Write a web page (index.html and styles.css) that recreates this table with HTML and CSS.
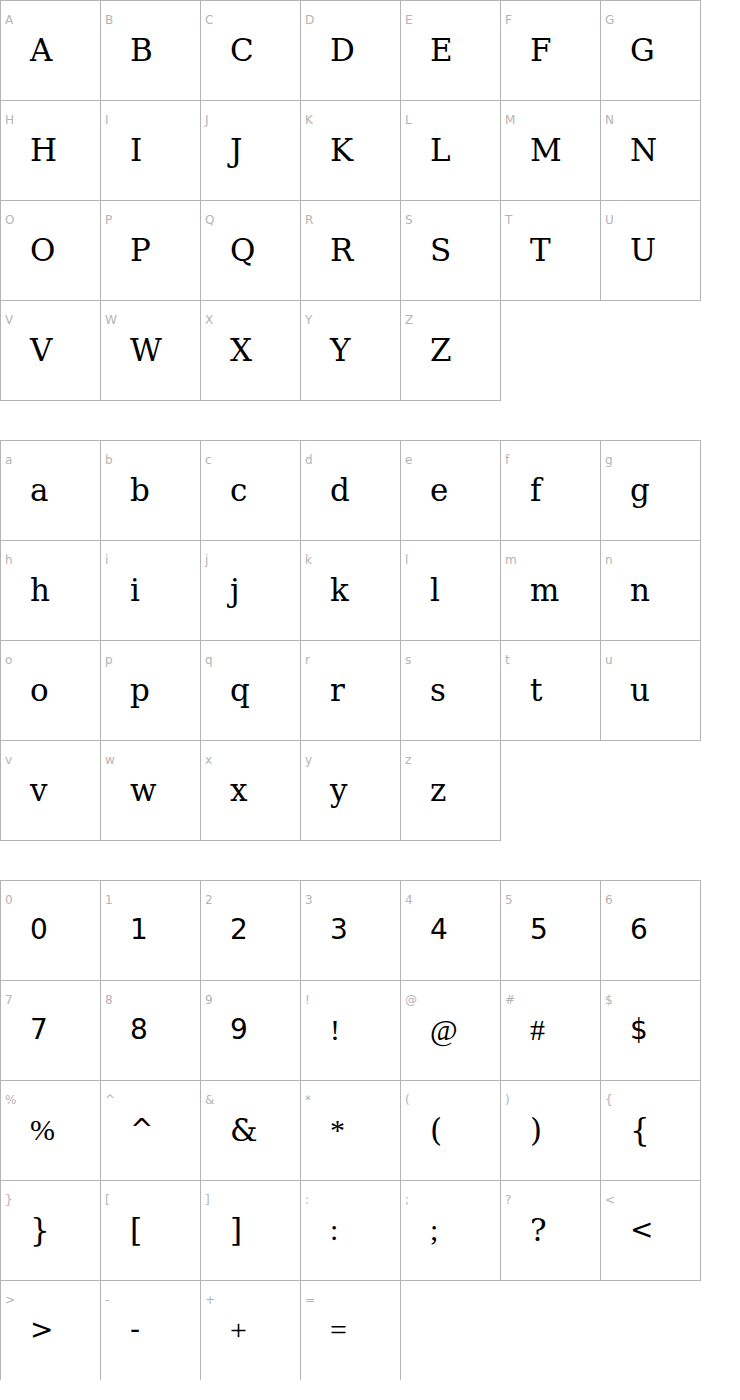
FILE: index.html
```html
<!DOCTYPE html>
<html>
<head>
<meta charset="utf-8">
<link rel="stylesheet" href="styles.css">
</head>
<body>
<div class="sheet">
  <div class="group">
    <div class="cell"><div class="lbl">A</div><div class="gl">A</div></div>
    <div class="cell"><div class="lbl">B</div><div class="gl">B</div></div>
    <div class="cell"><div class="lbl">C</div><div class="gl">C</div></div>
    <div class="cell"><div class="lbl">D</div><div class="gl">D</div></div>
    <div class="cell"><div class="lbl">E</div><div class="gl">E</div></div>
    <div class="cell"><div class="lbl">F</div><div class="gl">F</div></div>
    <div class="cell"><div class="lbl">G</div><div class="gl">G</div></div>
    <div class="cell"><div class="lbl">H</div><div class="gl">H</div></div>
    <div class="cell"><div class="lbl">I</div><div class="gl">I</div></div>
    <div class="cell"><div class="lbl">J</div><div class="gl">J</div></div>
    <div class="cell"><div class="lbl">K</div><div class="gl">K</div></div>
    <div class="cell"><div class="lbl">L</div><div class="gl">L</div></div>
    <div class="cell"><div class="lbl">M</div><div class="gl">M</div></div>
    <div class="cell"><div class="lbl">N</div><div class="gl">N</div></div>
    <div class="cell"><div class="lbl">O</div><div class="gl">O</div></div>
    <div class="cell"><div class="lbl">P</div><div class="gl">P</div></div>
    <div class="cell"><div class="lbl">Q</div><div class="gl">Q</div></div>
    <div class="cell"><div class="lbl">R</div><div class="gl">R</div></div>
    <div class="cell"><div class="lbl">S</div><div class="gl">S</div></div>
    <div class="cell"><div class="lbl">T</div><div class="gl">T</div></div>
    <div class="cell"><div class="lbl">U</div><div class="gl">U</div></div>
    <div class="cell"><div class="lbl">V</div><div class="gl">V</div></div>
    <div class="cell"><div class="lbl">W</div><div class="gl">W</div></div>
    <div class="cell"><div class="lbl">X</div><div class="gl">X</div></div>
    <div class="cell"><div class="lbl">Y</div><div class="gl">Y</div></div>
    <div class="cell"><div class="lbl">Z</div><div class="gl">Z</div></div>
  </div>
  <div class="group">
    <div class="cell"><div class="lbl">a</div><div class="gl">a</div></div>
    <div class="cell"><div class="lbl">b</div><div class="gl">b</div></div>
    <div class="cell"><div class="lbl">c</div><div class="gl">c</div></div>
    <div class="cell"><div class="lbl">d</div><div class="gl">d</div></div>
    <div class="cell"><div class="lbl">e</div><div class="gl">e</div></div>
    <div class="cell"><div class="lbl">f</div><div class="gl">f</div></div>
    <div class="cell"><div class="lbl">g</div><div class="gl">g</div></div>
    <div class="cell"><div class="lbl">h</div><div class="gl">h</div></div>
    <div class="cell"><div class="lbl">i</div><div class="gl">i</div></div>
    <div class="cell"><div class="lbl">j</div><div class="gl">j</div></div>
    <div class="cell"><div class="lbl">k</div><div class="gl">k</div></div>
    <div class="cell"><div class="lbl">l</div><div class="gl">l</div></div>
    <div class="cell"><div class="lbl">m</div><div class="gl">m</div></div>
    <div class="cell"><div class="lbl">n</div><div class="gl">n</div></div>
    <div class="cell"><div class="lbl">o</div><div class="gl">o</div></div>
    <div class="cell"><div class="lbl">p</div><div class="gl">p</div></div>
    <div class="cell"><div class="lbl">q</div><div class="gl">q</div></div>
    <div class="cell"><div class="lbl">r</div><div class="gl">r</div></div>
    <div class="cell"><div class="lbl">s</div><div class="gl">s</div></div>
    <div class="cell"><div class="lbl">t</div><div class="gl">t</div></div>
    <div class="cell"><div class="lbl">u</div><div class="gl">u</div></div>
    <div class="cell"><div class="lbl">v</div><div class="gl">v</div></div>
    <div class="cell"><div class="lbl">w</div><div class="gl">w</div></div>
    <div class="cell"><div class="lbl">x</div><div class="gl">x</div></div>
    <div class="cell"><div class="lbl">y</div><div class="gl">y</div></div>
    <div class="cell"><div class="lbl">z</div><div class="gl">z</div></div>
  </div>
  <div class="group">
    <div class="cell"><div class="lbl">0</div><div class="gl sans">0</div></div>
    <div class="cell"><div class="lbl">1</div><div class="gl sans">1</div></div>
    <div class="cell"><div class="lbl">2</div><div class="gl sans">2</div></div>
    <div class="cell"><div class="lbl">3</div><div class="gl sans">3</div></div>
    <div class="cell"><div class="lbl">4</div><div class="gl sans">4</div></div>
    <div class="cell"><div class="lbl">5</div><div class="gl sans">5</div></div>
    <div class="cell"><div class="lbl">6</div><div class="gl sans">6</div></div>
    <div class="cell"><div class="lbl">7</div><div class="gl sans">7</div></div>
    <div class="cell"><div class="lbl">8</div><div class="gl sans">8</div></div>
    <div class="cell"><div class="lbl">9</div><div class="gl sans">9</div></div>
    <div class="cell"><div class="lbl">!</div><div class="gl times">!</div></div>
    <div class="cell"><div class="lbl">@</div><div class="gl times">@</div></div>
    <div class="cell"><div class="lbl">#</div><div class="gl times">#</div></div>
    <div class="cell"><div class="lbl">$</div><div class="gl sans">$</div></div>
    <div class="cell"><div class="lbl">%</div><div class="gl times">%</div></div>
    <div class="cell"><div class="lbl">^</div><div class="gl sans">^</div></div>
    <div class="cell"><div class="lbl">&amp;</div><div class="gl">&amp;</div></div>
    <div class="cell"><div class="lbl">*</div><div class="gl times">*</div></div>
    <div class="cell"><div class="lbl">(</div><div class="gl">(</div></div>
    <div class="cell"><div class="lbl">)</div><div class="gl">)</div></div>
    <div class="cell"><div class="lbl">{</div><div class="gl">{</div></div>
    <div class="cell"><div class="lbl">}</div><div class="gl">}</div></div>
    <div class="cell"><div class="lbl">[</div><div class="gl">[</div></div>
    <div class="cell"><div class="lbl">]</div><div class="gl">]</div></div>
    <div class="cell"><div class="lbl">:</div><div class="gl times">:</div></div>
    <div class="cell"><div class="lbl">;</div><div class="gl times">;</div></div>
    <div class="cell"><div class="lbl">?</div><div class="gl">?</div></div>
    <div class="cell"><div class="lbl">&lt;</div><div class="gl sans">&lt;</div></div>
    <div class="cell"><div class="lbl">&gt;</div><div class="gl sans">&gt;</div></div>
    <div class="cell"><div class="lbl">-</div><div class="gl sans">-</div></div>
    <div class="cell"><div class="lbl">+</div><div class="gl times">+</div></div>
    <div class="cell"><div class="lbl">=</div><div class="gl times">=</div></div>
  </div>
</div>
</body>
</html>
```
FILE: styles.css
```css
html, body {
  margin: 0;
  padding: 0;
  background: #ffffff;
}
.sheet {
  display: flex;
  flex-direction: column;
  gap: 40px;
}
.group {
  display: flex;
  flex-wrap: wrap;
  width: 701px;
}
.cell {
  box-sizing: border-box;
  width: 101px;
  height: 101px;
  margin-right: -1px;
  margin-bottom: -1px;
  border: 1px solid #b4b4b4;
}
.lbl {
  font-family: "DejaVu Sans", Verdana, sans-serif;
  font-size: 12px;
  line-height: 14px;
  color: #b4b4b4;
  padding: 12px 0 0 4px;
  height: 14px;
}
.gl {
  font-family: "DejaVu Serif", serif;
  font-size: 31px;
  line-height: 36px;
  color: #000000;
  padding-left: 29px;
  margin-top: 5px;
}
.gl.sans {
  font-family: "DejaVu Sans", sans-serif;
  font-size: 28px;
}
.gl.times {
  font-family: "Liberation Serif", serif;
  font-size: 30px;
}
```
